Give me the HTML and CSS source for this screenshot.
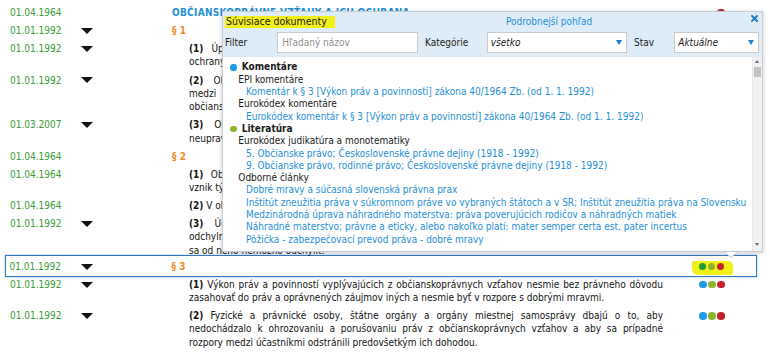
FILE: index.html
```html
<!DOCTYPE html>
<html lang="sk">
<head>
<meta charset="utf-8">
<title>Občiansky zákonník</title>
<link rel="stylesheet" href="styles.css">
</head>
<body>
<div class="doc">
  <div class="row">
    <div class="date">01.04.1964</div><div class="tcell"></div>
    <div class="content"><div class="head title">OBČIANSKOPRÁVNE VZŤAHY A ICH OCHRANA</div></div>
    <div class="dots"><i class="dot none"></i><i class="dot none"></i><i class="dot r"></i></div>
  </div>
  <div class="row">
    <div class="date">01.01.1992</div><div class="tcell"><span class="tri"></span></div>
    <div class="content"><div class="head sec">§ 1</div></div>
    <div class="dots"><i class="dot b"></i><i class="dot g"></i><i class="dot r"></i></div>
  </div>
  <div class="row">
    <div class="date">01.01.1992</div><div class="tcell"><span class="tri"></span></div>
    <div class="content para">
      <span class="ln"><b>(1)</b> Úprava občianskoprávnych vzťahov vychádza zo zásady rovnosti účastníkov a zo zásady</span>
      <span class="ln last">ochrany ich práv pred neoprávnenými zásahmi.</span>
    </div>
    <div class="dots"><i class="dot b"></i><i class="dot g"></i><i class="dot r"></i></div>
  </div>
  <div class="row">
    <div class="date">01.01.1992</div><div class="tcell"><span class="tri"></span></div>
    <div class="content para">
      <span class="ln"><b>(2)</b> Občiansky zákonník upravuje majetkové vzťahy fyzických a právnických osôb, vzťahy</span>
      <span class="ln">medzi týmito osobami a štátom, ako aj vzťahy vyplývajúce z práva na ochranu osôb, pokiaľ</span>
      <span class="ln last">občianskoprávne vzťahy neupravujú iné zákony.</span>
    </div>
    <div class="dots"><i class="dot b"></i><i class="dot g"></i><i class="dot r"></i></div>
  </div>
  <div class="row">
    <div class="date">01.03.2007</div><div class="tcell"><span class="tri"></span></div>
    <div class="content para">
      <span class="ln"><b>(3)</b> Občiansky zákonník sa použije aj na vzťahy podľa osobitných predpisov, ak tieto</span>
      <span class="ln last">neupravujú inak.</span>
    </div>
    <div class="dots"><i class="dot b"></i><i class="dot g"></i><i class="dot r"></i></div>
  </div>
  <div class="row">
    <div class="date">01.04.1964</div><div class="tcell"></div>
    <div class="content"><div class="head sec">§ 2</div></div>
    <div class="dots"><i class="dot b"></i><i class="dot g"></i><i class="dot r"></i></div>
  </div>
  <div class="row">
    <div class="date">01.04.1964</div><div class="tcell"></div>
    <div class="content para">
      <span class="ln"><b>(1)</b> Občianskoprávne vzťahy vznikajú z právnych úkonov alebo z iných skutočností, s ktorými</span>
      <span class="ln last">vznik týchto vzťahov spája zákon.</span>
    </div>
    <div class="dots"><i class="dot b"></i><i class="dot g"></i><i class="dot r"></i></div>
  </div>
  <div class="row">
    <div class="date">01.04.1964</div><div class="tcell"></div>
    <div class="content para">
      <span class="ln last"><b>(2)</b> V občianskoprávnych vzťahoch majú účastníci rovnaké postavenie.</span>
    </div>
    <div class="dots"><i class="dot b"></i><i class="dot g"></i><i class="dot r"></i></div>
  </div>
  <div class="row">
    <div class="date">01.01.1992</div><div class="tcell"><span class="tri"></span></div>
    <div class="content para">
      <span class="ln"><b>(3)</b> Účastníci občianskoprávnych vzťahov si môžu vzájomné práva a povinnosti upraviť</span>
      <span class="ln">odchylne od zákona, ak to zákon výslovne nezakazuje a ak z povahy zákona nevyplýva, že</span>
      <span class="ln last">sa od neho nemožno odchýliť.</span>
    </div>
    <div class="dots"><i class="dot b"></i><i class="dot g"></i><i class="dot r"></i></div>
  </div>
  <div class="row sel">
    <div class="date">01.01.1992</div><div class="tcell"><span class="tri"></span></div>
    <div class="content"><div class="head sec">§ 3</div></div>
    <div class="dots"><i class="dot gg"></i><i class="dot g"></i><i class="dot r"></i></div>
  </div>
  <div class="row">
    <div class="date">01.01.1992</div><div class="tcell"><span class="tri"></span></div>
    <div class="content para">
      <span class="ln"><b>(1)</b> Výkon práv a povinností vyplývajúcich z občianskoprávnych vzťahov nesmie bez právneho dôvodu</span>
      <span class="ln last">zasahovať do práv a oprávnených záujmov iných a nesmie byť v rozpore s dobrými mravmi.</span>
    </div>
    <div class="dots"><i class="dot b"></i><i class="dot g"></i><i class="dot r"></i></div>
  </div>
  <div class="row">
    <div class="date">01.01.1992</div><div class="tcell"><span class="tri"></span></div>
    <div class="content para">
      <span class="ln"><b>(2)</b> Fyzické a právnické osoby, štátne orgány a orgány miestnej samosprávy dbajú o to, aby</span>
      <span class="ln">nedochádzalo k ohrozovaniu a porušovaniu práv z občianskoprávnych vzťahov a aby sa prípadné</span>
      <span class="ln last">rozpory medzi účastníkmi odstránili predovšetkým ich dohodou.</span>
    </div>
    <div class="dots"><i class="dot b"></i><i class="dot g"></i><i class="dot r"></i></div>
  </div>
</div>

<div class="popup">
  <div class="pop-head">
    <div class="pop-top">
      <span class="pop-title">Súvisiace dokumenty</span>
      <span class="pop-detail">Podrobnejší pohľad</span>
      <svg class="pop-close" width="7" height="7" viewBox="0 0 7 7"><path d="M1 1L6 6M6 1L1 6" stroke="#1b79c4" stroke-width="1.9" stroke-linecap="square"/></svg>
    </div>
    <div class="pop-filter">
      <span class="lbl l1">Filter</span>
      <span class="inp">Hľadaný názov</span>
      <span class="lbl l2">Kategórie</span>
      <span class="selbox s1"><span class="val">všetko</span><i class="arr"></i></span>
      <span class="lbl l3">Stav</span>
      <span class="selbox s2"><span class="val">Aktuálne</span><i class="arr"></i></span>
    </div>
  </div>
  <div class="pop-body">
    <div class="pop-list">
      <div class="cat c-blue">Komentáre</div>
      <div class="grp">EPI komentáre</div>
      <div class="lnk">Komentár k § 3 [Výkon práv a povinností] zákona 40/1964 Zb. (od 1. 1. 1992)</div>
      <div class="grp">Eurokódex komentáre</div>
      <div class="lnk">Eurokódex komentár k § 3 [Výkon práv a povinností] zákona 40/1964 Zb. (od 1. 1. 1992)</div>
      <div class="cat c-green">Literatúra</div>
      <div class="grp">Eurokódex judikatúra a monotematiky</div>
      <div class="lnk">5. Občianske právo; Československé právne dejiny (1918 - 1992)</div>
      <div class="lnk">9. Občianske právo, rodinné právo; Československé právne dejiny (1918 - 1992)</div>
      <div class="grp">Odborné články</div>
      <div class="lnk">Dobré mravy a súčasná slovenská právna prax</div>
      <div class="lnk">Inštitút zneužitia práva v súkromnom práve vo vybraných štátoch a v SR; Inštitút zneužitia práva na Slovensku</div>
      <div class="lnk">Medzinárodná úprava náhradného materstva: práva poverujúcich rodičov a náhradných matiek</div>
      <div class="lnk">Náhradné materstvo; právne a eticky, alebo nakoľko platí: mater semper certa est, pater incertus</div>
      <div class="lnk">Pôžička - zabezpečovací prevod práva - dobré mravy</div>
    </div>
    <div class="sb">
      <i class="sb-up"></i>
      <i class="sb-thumb"></i>
      <i class="sb-fill"></i>
      <i class="sb-down"></i>
    </div>
  </div>
</div>
</body>
</html>
```
FILE: styles.css
```css
html, body {
  margin: 0;
  background: #fff;
}
body {
  font-family: "DejaVu Sans Condensed", "DejaVu Sans", sans-serif;
  font-size: 10px;
  color: #141414;
  position: relative;
  width: 770px;
  height: 355px;
  overflow: hidden;
}

/* ---------- document table ---------- */
.doc {
  padding: 3.65px 0 0 5px;
  width: 752px;
}
.row {
  display: grid;
  grid-template-columns: 70px 92px 491px 1fr;
  padding: 2.4px 0 2.4px 5px;
  line-height: 13.3px;
}
.date {
  color: #3a9c36;
}
.tcell {
  display: flex;
  align-items: flex-start;
}
.tri {
  display: block;
  margin: 3.7px 0 0 1px;
  width: 0;
  height: 0;
  border-left: 6px solid transparent;
  border-right: 6px solid transparent;
  border-top: 6px solid #111;
}
.head {
  font-weight: bold;
}
.title {
  color: #1f8fd6;
  letter-spacing: 0.3px;
  white-space: nowrap;
}
.sec {
  color: #f28a1e;
}
.para {
  padding-left: 17px;
}
.ln {
  display: block;
  text-align: justify;
  text-align-last: justify;
}
.ln.last {
  text-align-last: left;
}
.ln b {
  font-weight: bold;
}
.dots {
  display: flex;
  align-items: center;
  gap: 1.5px;
  height: 13.3px;
  padding-left: 36px;
}
.dot {
  display: block;
  flex-shrink: 0;
  width: 7.5px;
  height: 7.5px;
  border-radius: 50%;
}
.dot.b { background: #1d9be6; }
.dot.g { background: #8cb52b; }
.dot.r { background: #c5202b; }
.dot.gg { background: #1f9c35; }
.dot.none { background: transparent; }

.row.sel {
  border: 1.5px solid #2f78c6;
  box-shadow: 0 0 2px rgba(47, 120, 198, 0.45);
  margin: -4.65px 0 -1.65px;
  padding: 4.15px 0 2.85px 3.5px;
}
.sel .dots {
  position: relative;
  z-index: 0;
}
.sel .dots::before {
  content: "";
  position: absolute;
  left: 29.7px;
  top: 1.3px;
  width: 40.6px;
  height: 13.7px;
  background: #f3ef18;
  border-radius: 2px 5px 3px 6px;
  z-index: -1;
}

/* ---------- popup ---------- */
.popup {
  position: absolute;
  left: 222px;
  top: 11px;
  width: 541px;
  height: 241px;
  box-sizing: border-box;
  border: 1px solid #c2cfd9;
  background: #fff;
  box-shadow: 0 1px 4px rgba(0, 0, 0, 0.22);
  display: flex;
  flex-direction: column;
  z-index: 5;
}
.popup::before,
.popup::after {
  content: "";
  position: absolute;
  width: 0;
  height: 0;
}
.popup::before {
  left: 500px;
  bottom: -7px;
  border-left: 8px solid transparent;
  border-right: 8px solid transparent;
  border-top: 7px solid #b9c6d0;
}
.popup::after {
  left: 501.5px;
  bottom: -5.6px;
  border-left: 6.5px solid transparent;
  border-right: 6.5px solid transparent;
  border-top: 5.8px solid #fff;
}
.pop-head {
  background: #deecf7;
}
.pop-top {
  height: 18px;
  display: flex;
  align-items: center;
  padding-left: 2px;
}
.pop-title {
  display: block;
  box-sizing: border-box;
  width: 110px;
  padding-left: 1px;
  font-size: 10.5px;
  line-height: 11.7px;
  background: #f3ef18;
  color: #1a1a1a;
  white-space: nowrap;
  margin-top: 2px;
}
.pop-detail {
  margin-left: 171px;
  color: #1f8fd6;
  white-space: nowrap;
}
.pop-close {
  margin-left: auto;
  margin-right: 4px;
  align-self: flex-start;
  margin-top: 3px;
}
.pop-filter {
  display: flex;
  align-items: center;
  height: 20.5px;
  margin: 2.3px 0 4.2px;
  padding-left: 2px;
  white-space: nowrap;
}
.lbl {
  color: #1a1a1a;
}
.l1 { width: 52.3px; }
.l2 { width: 61.7px; margin-left: 6.7px; }
.l3 { width: 40.3px; margin-left: 6.7px; }
.inp,
.selbox {
  box-sizing: border-box;
  height: 20.5px;
  border: 1px solid #cacaca;
  background: #fff;
  display: flex;
  align-items: center;
}
.inp {
  width: 141px;
  padding-left: 4px;
  color: #8e8e8e;
}
.selbox {
  padding-left: 3px;
  justify-content: space-between;
  font-style: italic;
  color: #1a1a1a;
}
.s1 { width: 140.6px; padding-right: 4.6px; }
.s2 { width: 85px; padding-right: 4.3px; }
.arr {
  display: block;
  width: 0;
  height: 0;
  border-left: 3px solid transparent;
  border-right: 3px solid transparent;
  border-top: 5px solid #1b7fc7;
}

.pop-body {
  flex: 1;
  display: flex;
  min-height: 0;
}
.pop-list {
  flex: 1;
  min-width: 0;
  overflow: hidden;
  padding-top: 4.5px;
  line-height: 12.3px;
  white-space: nowrap;
}
.cat {
  display: flex;
  align-items: center;
  padding-left: 7.4px;
  font-weight: bold;
  color: #1a1a1a;
}
.cat::before {
  content: "";
  display: block;
  flex-shrink: 0;
  width: 6.4px;
  height: 6.4px;
  border-radius: 50%;
  margin-right: 4.9px;
}
.c-blue::before { background: #1d9be6; }
.c-green::before { background: #8cb52b; }
.grp {
  padding-left: 15.3px;
  color: #1a1a1a;
}
.lnk {
  padding-left: 23px;
  color: #1f8fd6;
}
.sb {
  width: 9.3px;
  background: #f1f1f1;
  border-left: 1px solid #e6e6e6;
  display: flex;
  flex-direction: column;
  align-items: center;
}
.sb-up,
.sb-down {
  display: block;
  width: 0;
  height: 0;
  border-left: 2.5px solid transparent;
  border-right: 2.5px solid transparent;
}
.sb-up {
  margin-top: 3px;
  border-bottom: 3px solid #6a6a6a;
}
.sb-thumb {
  display: block;
  width: 7.6px;
  height: 10px;
  margin-top: 3.7px;
  background: #c3c3c3;
}
.sb-fill {
  display: block;
  flex: 1;
}
.sb-down {
  margin-bottom: 5px;
  border-top: 3px solid #6a6a6a;
}
```
